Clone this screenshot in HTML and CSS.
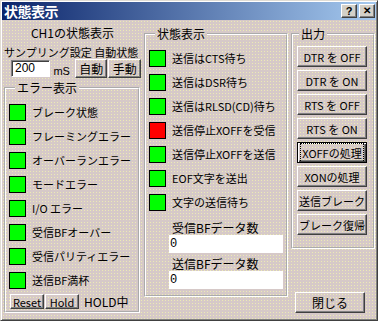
FILE: index.html
```html
<!DOCTYPE html>
<html lang="ja">
<head>
    <meta charset="UTF-8">
    <title>状態表示</title>
    <link rel="stylesheet" href="styles.css">
</head>
<body>
    <div class="window">
        <div class="titlebar">
            <span class="title">状態表示</span>
            <div class="title-buttons">
                <span class="tbtn">?</span>
                <span class="tbtn close">✕</span>
            </div>
        </div>
        <div class="content">
            <div class="col-left">
                <div class="ch-title">CH1の状態表示</div>
                <div class="sampling-label">サンプリング設定 自動状態</div>
                <div class="sampling-row">
                    <span class="edit">200</span>
                    <span class="unit">mS</span>
                    <button class="btn small">自動</button>
                    <button class="btn small">手動</button>
                </div>
                <fieldset class="group group-error">
                    <legend>エラー表示</legend>
                    <div class="lamp-row"><span class="lamp"></span>ブレーク状態</div>
                    <div class="lamp-row"><span class="lamp"></span>フレーミングエラー</div>
                    <div class="lamp-row"><span class="lamp"></span>オーバーランエラー</div>
                    <div class="lamp-row"><span class="lamp"></span>モードエラー</div>
                    <div class="lamp-row"><span class="lamp"></span>I/O エラー</div>
                    <div class="lamp-row"><span class="lamp"></span>受信BFオーバー</div>
                    <div class="lamp-row"><span class="lamp"></span>受信パリティエラー</div>
                    <div class="lamp-row"><span class="lamp"></span>送信BF満杯</div>
                    <div class="hold-row">
                        <button class="btn tiny">Reset</button>
                        <button class="btn tiny">Hold</button>
                        <span class="hold-text">HOLD中</span>
                    </div>
                </fieldset>
            </div>

            <div class="col-mid">
                <fieldset class="group group-status">
                    <legend>状態表示</legend>
                    <div class="lamp-row"><span class="lamp"></span>送信はCTS待ち</div>
                    <div class="lamp-row"><span class="lamp"></span>送信はDSR待ち</div>
                    <div class="lamp-row"><span class="lamp"></span>送信はRLSD(CD)待ち</div>
                    <div class="lamp-row"><span class="lamp red"></span>送信停止XOFFを受信</div>
                    <div class="lamp-row"><span class="lamp"></span>送信停止XOFFを送信</div>
                    <div class="lamp-row"><span class="lamp"></span>EOF文字を送出</div>
                    <div class="lamp-row"><span class="lamp"></span>文字の送信待ち</div>
                    <div class="count-label first">受信BFデータ数</div>
                    <div class="count-box">0</div>
                    <div class="count-label">送信BFデータ数</div>
                    <div class="count-box">0</div>
                </fieldset>
            </div>

            <div class="col-right">
                <fieldset class="group group-out">
                    <legend>出力</legend>
                    <button class="btn out">DTR を OFF</button>
                    <button class="btn out">DTR を ON</button>
                    <button class="btn out">RTS を OFF</button>
                    <button class="btn out">RTS を ON</button>
                    <button class="btn out focused"><span>XOFFの処理</span></button>
                    <button class="btn out">XONの処理</button>
                    <button class="btn out">送信ブレーク</button>
                    <button class="btn out">ブレーク復帰</button>
                </fieldset>
                <button class="btn out close-btn">閉じる</button>
            </div>
        </div>
    </div>
</body>
</html>
```

FILE: styles.css
```css
/* ダイアログ全体 */
body {
    margin: 0;
    padding: 0;
    font-family: "Noto Sans CJK JP", "Noto Sans", sans-serif;
    font-size: 11px;
    color: #000;
}

.window {
    box-sizing: border-box;
    width: 378px;
    height: 321px;
    padding: 1px;
    border: 1px solid;
    border-color: #e0dcd4 #404040 #404040 #e0dcd4;
    box-shadow: inset 1px 1px 0 #fff, inset -1px -1px 0 #808080;
    background-color: #d6c9c8;
    background-image:
        linear-gradient(#d6c9c8 2px, transparent 2px),
        linear-gradient(90deg, #d6c9c8 2px, #ecebb4 2px);
    background-size: 3px 3px;
    display: flex;
    flex-direction: column;
}

.titlebar {
    height: 18px;
    display: flex;
    align-items: center;
    justify-content: space-between;
    background: linear-gradient(90deg, #0a246a, #a6caf0);
    padding: 0 1px 0 2px;
}

.title {
    color: #fff;
    font-weight: bold;
    font-size: 14px;
    letter-spacing: -0.5px;
    line-height: 16px;
}

.title-buttons {
    display: flex;
    gap: 2px;
}

.tbtn {
    box-sizing: border-box;
    width: 16px;
    height: 14px;
    background: #d4d0c8;
    border: 1px solid;
    border-color: #fff #404040 #404040 #fff;
    box-shadow: inset -1px -1px 0 #808080;
    font-family: "Liberation Sans", sans-serif;
    font-weight: bold;
    font-size: 11px;
    line-height: 12px;
    text-align: center;
}

.tbtn.close {
    font-size: 10px;
}

.content {
    display: flex;
    gap: 3px;
    padding: 0 0 0 2px;
    flex: 1;
}

/* ボタン */
.btn {
    box-sizing: border-box;
    margin: 0;
    padding: 0;
    font-family: inherit;
    font-size: 11px;
    color: #000;
    background: transparent;
    border: 1px solid;
    border-color: #fff #404040 #404040 #fff;
    box-shadow: inset -1px -1px 0 #808080;
    line-height: 14px;
}

.btn.small {
    width: 33px;
    height: 19px;
    font-size: 12px;
}

.btn.tiny {
    width: 34px;
    height: 15px;
    font-size: 11px;
    line-height: 12px;
}

.btn.out {
    display: block;
    width: 70px;
    height: 21px;
    margin: 0 0 3px 4px;
}

.btn.focused {
    border-color: #000;
    box-shadow: inset 1px 1px 0 #fff, inset -1px -1px 0 #404040, inset -2px -2px 0 #808080;
}

.btn.focused span {
    outline: 1px dotted #000;
    outline-offset: 1px;
}

.btn.close-btn {
    margin-top: 43px;
    font-size: 12px;
}

/* 左列 */
.col-left {
    width: 137px;
    display: flex;
    flex-direction: column;
}

.ch-title {
    margin-top: 6px;
    height: 14px;
    line-height: 14px;
    text-align: center;
    font-size: 12px;
}

.sampling-label {
    margin-top: 5px;
    height: 14px;
    line-height: 14px;
    font-size: 11px;
    white-space: nowrap;
}

.sampling-row {
    display: flex;
    align-items: center;
    height: 19px;
    margin-top: 0;
}

.edit {
    box-sizing: border-box;
    width: 40px;
    height: 17px;
    margin-left: 7px;
    background: #fff;
    border: 1px solid;
    border-color: #808080 #fff #fff #808080;
    box-shadow: inset 1px 1px 0 #404040;
    padding-left: 3px;
    font-family: "Liberation Sans", sans-serif;
    font-size: 12px;
    line-height: 15px;
}

.unit {
    margin: 4px 5px 0 3px;
    font-family: "Liberation Sans", sans-serif;
    font-size: 11px;
}

.btn.small + .btn.small {
    margin-left: 1px;
}

/* グループボックス */
.group {
    margin: 0;
    padding: 0;
    min-width: 0;
    border: 2px groove #fff;
}

.group legend {
    padding: 0 2px;
    margin-left: 6px;
    font-size: 12px;
    line-height: 14px;
}

.group-error {
    margin-top: 3px;
    height: 232px;
    width: 136px;
    box-sizing: border-box;
    padding: 5px 0 0 3px;
}

.col-mid {
    width: 144px;
}

.group-status {
    margin-top: 7px;
    height: 270px;
    box-sizing: border-box;
    padding: 5px 0 0 3px;
}

.col-right {
    width: 84px;
}

.group-out {
    margin-top: 7px;
    height: 222px;
    box-sizing: border-box;
    padding: 5px 0 0 0;
}

/* 表示ランプ */
.lamp-row {
    display: flex;
    align-items: center;
    height: 24px;
    white-space: nowrap;
}

.lamp {
    box-sizing: border-box;
    width: 17px;
    height: 17px;
    margin-right: 6px;
    background: #00ff00;
    border: 1px solid #000;
}

.lamp.red {
    background: #ff0000;
}

.hold-row {
    display: flex;
    align-items: center;
    margin-top: 1px;
    margin-left: 1px;
}

.btn.tiny + .btn.tiny {
    margin-left: 1px;
}

.hold-text {
    margin-left: 5px;
    font-size: 12px;
}

.count-label {
    margin: 4px 0 0 23px;
    height: 14px;
    line-height: 14px;
    font-size: 12px;
}

.count-label.first {
    margin-top: 7px;
}

.count-box {
    margin: 0 0 0 20px;
    width: 114px;
    height: 18px;
    background: #fff;
    font-family: "Liberation Mono", monospace;
    font-size: 12px;
    line-height: 18px;
    padding-left: 1px;
    box-sizing: border-box;
}
```
